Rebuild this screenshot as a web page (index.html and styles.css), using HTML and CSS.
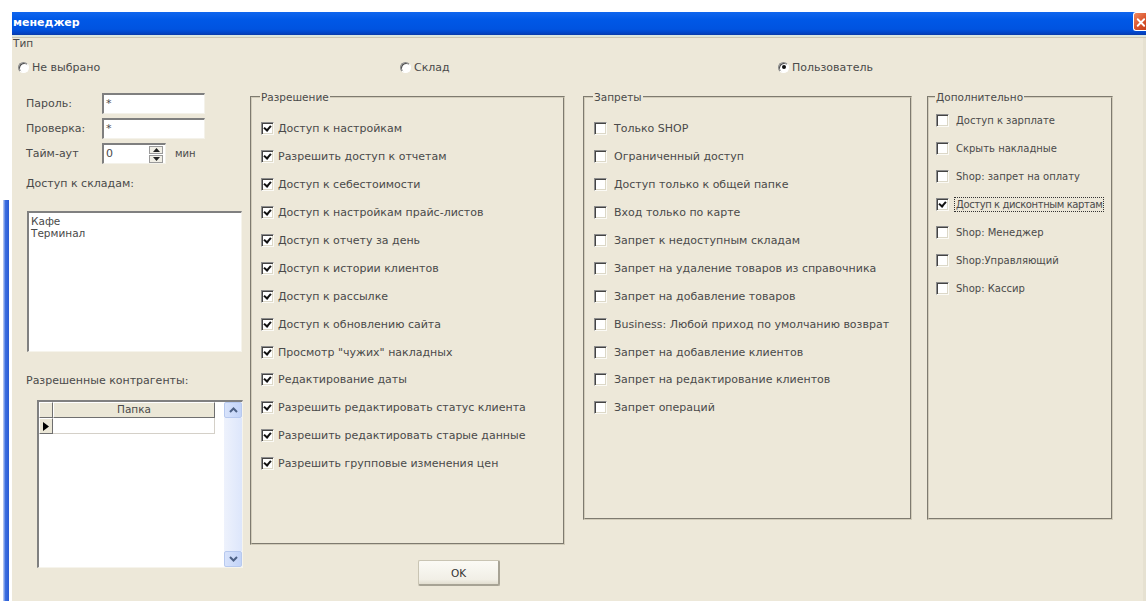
FILE: index.html
```html
<!DOCTYPE html>
<html lang="ru">
<head>
<meta charset="utf-8">
<title>менеджер</title>
<link rel="stylesheet" href="styles.css">
</head>
<body>
<div class="screen">
  <div class="edge"><div class="edge-bar"></div></div>
  <div class="window">
    <div class="titlebar">
      <span class="title">менеджер</span>
      <span class="close">
        <svg viewBox="0 0 13 19" width="13" height="19"><path d="M4 6 L11 13 M11 6 L4 13" stroke="#fff" stroke-width="2" stroke-linecap="round"/></svg>
      </span>
    </div>
    <div class="frame-top"></div>
    <div class="client">
      <div class="type-label">Тип</div>
      <div class="type-row">
        <label class="radio"><span class="rb"></span>Не выбрано</label>
        <label class="radio"><span class="rb"></span>Склад</label>
        <label class="radio"><span class="rb on"></span>Пользователь</label>
      </div>

      <div class="main">
        <div class="left">
          <div class="field">
            <span class="field-label">Пароль:</span>
            <span class="input">*</span>
          </div>
          <div class="field">
            <span class="field-label">Проверка:</span>
            <span class="input">*</span>
          </div>
          <div class="field">
            <span class="field-label">Тайм-аут</span>
            <span class="input spin-input">0
              <span class="spin">
                <span class="spin-btn"><svg viewBox="0 0 7 4" width="7" height="4"><path d="M0 4 L3.5 0 L7 4Z" fill="#222"/></svg></span>
                <span class="spin-btn"><svg viewBox="0 0 7 4" width="7" height="4"><path d="M0 0 L3.5 4 L7 0Z" fill="#222"/></svg></span>
              </span>
            </span>
            <span class="unit">мин</span>
          </div>
          <div class="caption stores-caption">Доступ к складам:</div>
          <div class="listbox">
            <div>Кафе</div>
            <div>Терминал</div>
          </div>
          <div class="caption agents-caption">Разрешенные контрагенты:</div>
          <div class="grid">
            <div class="grid-body">
              <div class="grid-head">
                <span class="ind-cell"></span>
                <span class="head-cell">Папка</span>
              </div>
              <div class="grid-row">
                <span class="ind-cell row-ind"><svg viewBox="0 0 6 9" width="6" height="9"><path d="M0 0 L6 4.5 L0 9Z" fill="#000"/></svg></span>
                <span class="data-cell"></span>
              </div>
            </div>
            <div class="vscroll">
              <span class="sb-btn"><svg viewBox="0 0 9 6" width="9" height="6"><path d="M1 5 L4.5 1.5 L8 5" fill="none" stroke="#4d6185" stroke-width="2"/></svg></span>
              <span class="sb-track"></span>
              <span class="sb-btn"><svg viewBox="0 0 9 6" width="9" height="6"><path d="M1 1 L4.5 4.5 L8 1" fill="none" stroke="#4d6185" stroke-width="2"/></svg></span>
            </div>
          </div>
        </div>

        <fieldset class="group perms">
          <legend>Разрешение</legend>
          <div class="check"><span class="cb on"></span>Доступ к настройкам</div>
          <div class="check"><span class="cb on"></span>Разрешить доступ к отчетам</div>
          <div class="check"><span class="cb on"></span>Доступ к себестоимости</div>
          <div class="check"><span class="cb on"></span>Доступ к настройкам прайс-листов</div>
          <div class="check"><span class="cb on"></span>Доступ к отчету за день</div>
          <div class="check"><span class="cb on"></span>Доступ к истории клиентов</div>
          <div class="check"><span class="cb on"></span>Доступ к рассылке</div>
          <div class="check"><span class="cb on"></span>Доступ к обновлению сайта</div>
          <div class="check"><span class="cb on"></span>Просмотр "чужих" накладных</div>
          <div class="check"><span class="cb on"></span>Редактирование даты</div>
          <div class="check"><span class="cb on"></span>Разрешить редактировать статус клиента</div>
          <div class="check"><span class="cb on"></span>Разрешить редактировать старые данные</div>
          <div class="check"><span class="cb on"></span>Разрешить групповые изменения цен</div>
        </fieldset>

        <fieldset class="group bans">
          <legend>Запреты</legend>
          <div class="check"><span class="cb"></span>Только SHOP</div>
          <div class="check"><span class="cb"></span>Ограниченный доступ</div>
          <div class="check"><span class="cb"></span>Доступ только к общей папке</div>
          <div class="check"><span class="cb"></span>Вход только по карте</div>
          <div class="check"><span class="cb"></span>Запрет к недоступным складам</div>
          <div class="check"><span class="cb"></span>Запрет на удаление товаров из справочника</div>
          <div class="check"><span class="cb"></span>Запрет на добавление товаров</div>
          <div class="check"><span class="cb"></span>Business: Любой приход по умолчанию возврат</div>
          <div class="check"><span class="cb"></span>Запрет на добавление клиентов</div>
          <div class="check"><span class="cb"></span>Запрет на редактирование клиентов</div>
          <div class="check"><span class="cb"></span>Запрет операций</div>
        </fieldset>

        <fieldset class="group extra">
          <legend>Дополнительно</legend>
          <div class="check"><span class="cb"></span>Доступ к зарплате</div>
          <div class="check"><span class="cb"></span>Скрыть накладные</div>
          <div class="check"><span class="cb"></span>Shop: запрет на оплату</div>
          <div class="check"><span class="cb on"></span><span class="focus">Доступ к дисконтным картам</span></div>
          <div class="check"><span class="cb"></span>Shop: Менеджер</div>
          <div class="check"><span class="cb"></span>Shop:Управляющий</div>
          <div class="check"><span class="cb"></span>Shop: Кассир</div>
        </fieldset>
      </div>

      <div class="footer">
        <button class="btn" type="button">OK</button>
      </div>
    </div>
  </div>
</div>
</body>
</html>
```

FILE: styles.css
```css
* { box-sizing: border-box; }

html, body {
  margin: 0;
  padding: 0;
}

body {
  background: #fff;
  font-family: "DejaVu Sans", Tahoma, sans-serif;
  font-size: 11px;
  color: #4a4a4a;
}

.screen {
  display: flex;
  width: 1146px;
  height: 601px;
  overflow: hidden;
}

/* strip of the window lying behind */
.edge {
  width: 12px;
  flex: none;
  display: flex;
  padding-top: 200px;
}

.edge-bar {
  margin-left: 3px;
  width: 6px;
  background: linear-gradient(to right, #c9d6f3, #3c6ee0 40%, #2a5bd3);
}

.window {
  flex: 1;
  min-width: 0;
  margin-top: 12px;
  display: flex;
  flex-direction: column;
}

/* caption bar */
.titlebar {
  height: 23px;
  flex: none;
  display: flex;
  align-items: flex-start;
  justify-content: space-between;
  background: linear-gradient(to bottom, #1066ee 0%, #0058e6 35%, #0053e0 75%, #0243c4 92%, #0a3aa8 100%);
}

.title {
  color: #fff;
  font-weight: bold;
  font-size: 11px;
  line-height: 22px;
  padding-left: 1px;
}

.close {
  width: 13px;
  height: 19px;
  background: linear-gradient(135deg, #f08a62, #d8522b 60%, #c2401d);
  border: 1px solid #fff;
  border-right: none;
  border-radius: 3px 0 0 3px;
  display: flex;
}

.frame-top {
  height: 3px;
  flex: none;
  background: #dbe6df;
  border-bottom: 1px solid #cdc6b4;
}

.client {
  flex: 1;
  background: #ede8d9;
  border-right: 3px solid #e6e1d1;
  display: flex;
  flex-direction: column;
}

/* type selector */
.type-label {
  line-height: 10px;
  height: 10px;
  padding-left: 1px;
  font-size: 10.5px;
}

.type-row {
  height: 38px;
  display: grid;
  grid-template-columns: 382px 378px auto;
  align-items: center;
  padding-left: 6px;
}

.radio {
  display: flex;
  align-items: center;
  gap: 3px;
}

.rb {
  width: 11px;
  height: 11px;
  border-radius: 50%;
  background: #fff;
  border: 1px solid;
  border-color: #8a8a8a #fff #fff #8a8a8a;
  box-shadow: inset 1px 1px 0 #505050;
  display: flex;
  align-items: center;
  justify-content: center;
}

.rb.on::after {
  content: "";
  width: 4px;
  height: 4px;
  border-radius: 50%;
  background: #111;
}

/* main area */
.main {
  display: flex;
  align-items: flex-start;
  height: 459px;
  margin-top: 4px;
}

.left {
  width: 238px;
  flex: none;
  padding-top: 3px;
  padding-left: 14px;
}

.field {
  display: flex;
  align-items: center;
  height: 21px;
  margin-bottom: 4px;
}

.field-label {
  width: 76px;
  flex: none;
}

.input {
  width: 103px;
  height: 21px;
  background: #fff;
  border-top: 2px solid #7f7f7f;
  border-left: 2px solid #7f7f7f;
  border-right: 1px solid #f4f2ea;
  border-bottom: 1px solid #f4f2ea;
  padding: 2px 2px 0;
  line-height: 14px;
  display: flex;
}

.spin-input {
  width: 64px;
  justify-content: space-between;
  padding-right: 2px;
}

.spin {
  width: 14px;
  display: flex;
  flex-direction: column;
  gap: 1px;
  margin-top: -1px;
}

.spin-btn {
  height: 8px;
  background: #f1efe6;
  border: 1px solid #9a9a9a;
  display: flex;
  align-items: center;
  justify-content: center;
}

.unit {
  margin-left: 9px;
  font-size: 10px;
}

.caption {
  height: 14px;
  line-height: 14px;
}

.stores-caption { margin-top: 13px; }

.listbox {
  margin-top: 20px;
  margin-left: 1px;
  width: 215px;
  height: 141px;
  background: #fff;
  border-top: 2px solid #808080;
  border-left: 2px solid #808080;
  border-right: 1px solid #f6f4ec;
  border-bottom: 1px solid #f6f4ec;
  padding: 2px 2px;
  line-height: 12px;
  font-size: 10.5px;
}

.agents-caption { margin-top: 22px; }

/* data grid */
.grid {
  margin-top: 12px;
  margin-left: 11px;
  width: 206px;
  height: 168px;
  background: #fff;
  border-top: 2px solid #808080;
  border-left: 2px solid #808080;
  border-right: 1px solid #f6f4ec;
  border-bottom: 1px solid #f6f4ec;
  display: flex;
}

.grid-body {
  flex: 1;
  display: flex;
  flex-direction: column;
}

.grid-head,
.grid-row {
  display: flex;
  height: 16px;
}

.ind-cell {
  width: 14px;
  flex: none;
  background: #ebe7d7;
  border: 1px solid;
  border-color: #fff #6f6f6f #6f6f6f #fff;
}

.row-ind {
  display: flex;
  align-items: center;
  justify-content: center;
}

.head-cell {
  width: 162px;
  background: #ebe7d7;
  border: 1px solid;
  border-color: #fff #6f6f6f #6f6f6f #fff;
  text-align: center;
  line-height: 13px;
  font-size: 10.5px;
}

.data-cell {
  width: 162px;
  border-right: 1px solid #d4d0c8;
  border-bottom: 1px solid #d4d0c8;
}

.vscroll {
  width: 18px;
  flex: none;
  display: flex;
  flex-direction: column;
  margin-left: 5px;
  background: #f2f4fb;
}

.sb-btn {
  height: 16px;
  background: linear-gradient(to right, #d8e3fb, #c2d3f8);
  border: 1px solid #b7c9ef;
  border-radius: 2px;
  display: flex;
  align-items: center;
  justify-content: center;
}

.sb-track {
  flex: 1;
  background: linear-gradient(to right, #eef2fc, #dde6fb);
}

/* group boxes */
.group {
  margin: 0;
  border: 2px groove #d2ccba;
  min-width: 0;
}

.group legend {
  padding: 0 1px;
  margin-left: -1px;
  line-height: 14px;
  font-size: 10.5px;
}

.perms {
  width: 315px;
  height: 455px;
  padding: 11px 6px 0 9px;
  margin-right: 18px;
}

.bans {
  width: 329px;
  height: 430px;
  padding: 11px 6px 0 9px;
  margin-right: 15px;
}

.extra {
  width: 186px;
  height: 430px;
  padding: 3px 4px 0 7px;
  font-size: 10px;
}

.check {
  height: 27.9px;
  display: flex;
  align-items: center;
  white-space: nowrap;
}

.perms .check { gap: 4px; }
.bans .check,
.extra .check { gap: 7px; }

.cb {
  width: 13px;
  height: 13px;
  flex: none;
  background: #fff;
  border: 1px solid;
  border-color: #8d8d8d #fbfaf5 #fbfaf5 #8d8d8d;
  box-shadow: inset 1px 1px 0 #444, inset -1px -1px 0 #dcd8c8;
  display: flex;
  align-items: center;
  justify-content: center;
}

.cb.on::after {
  content: "";
  width: 5px;
  height: 3px;
  border-left: 2px solid #111;
  border-bottom: 2px solid #111;
  transform: translate(0, -1px) rotate(-50deg);
}

.focus {
  outline: 1px dotted #333;
  outline-offset: 1px;
  letter-spacing: -0.4px;
}

/* buttons */
.footer {
  padding-top: 11px;
  padding-left: 406px;
}

.btn {
  width: 82px;
  height: 26px;
  font: inherit;
  font-size: 10.5px;
  color: #333;
  background: linear-gradient(to bottom, #fbfaf5, #f1efe6 80%, #e2ded0);
  border: 1px solid #c9c4b3;
  border-right: 2px solid #a7a395;
  border-bottom: 2px solid #a7a395;
  border-radius: 2px;
  padding: 0;
}
```
